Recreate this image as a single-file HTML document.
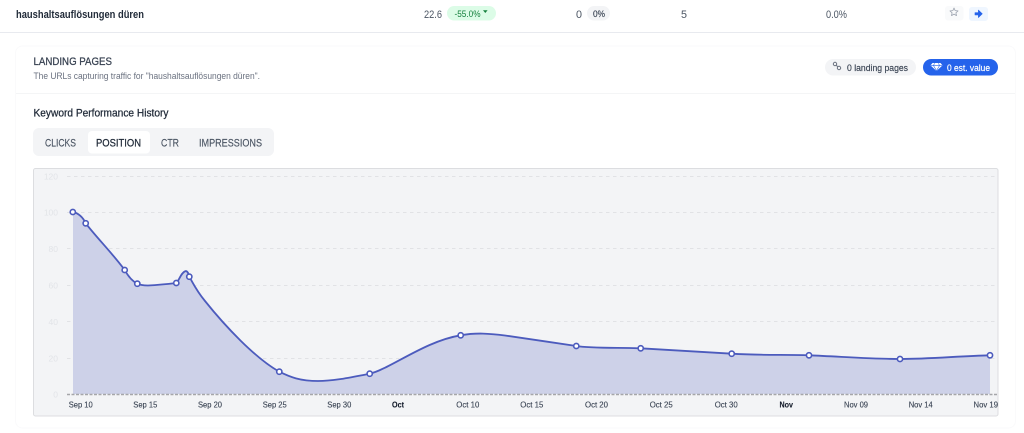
<!DOCTYPE html>
<html lang="en">
<head>
<meta charset="utf-8">
<title>Keyword Performance</title>
<style>
html,body{margin:0;padding:0;width:1024px;height:433px;overflow:hidden;background:#fff}
svg{display:block;filter:blur(.35px)}
text{font-family:"Liberation Sans",sans-serif;font-size:10px;fill:#374151}
.axis{font-size:8.6px;fill:#374151;stroke:#374151;stroke-width:.12px}
.y{font-size:8.5px;fill:#e2e4e8;text-anchor:end}
.grid{stroke:#e1e2e5;stroke-width:1;stroke-dasharray:3.5 3.5}
.pt{fill:#fff;stroke:#4c5bbd;stroke-width:1.6}
</style>
</head>
<body>
<svg width="1024" height="433" viewBox="0 0 1024 433" xmlns="http://www.w3.org/2000/svg">
  <!-- top row -->
  <line x1="0" y1="32.5" x2="1024" y2="32.5" stroke="#e8eaef"/>
  <text x="16" y="17.8" style="font-size:11px;font-weight:bold;fill:#1f2937" textLength="128" lengthAdjust="spacingAndGlyphs">haushaltsauflösungen düren</text>
  <text x="424" y="17.8" style="font-size:11px;fill:#4b5563" textLength="18" lengthAdjust="spacingAndGlyphs">22.6</text>
  <rect x="447" y="6" width="49" height="14.5" rx="7.2" fill="#dcfce7"/>
  <text x="454.5" y="17" style="font-size:9.5px;fill:#15803d" textLength="26" lengthAdjust="spacingAndGlyphs">-55.0%</text>
  <path d="M483 10.2 h4.6 l-2.3 2.8z" fill="#15803d"/>
  <text x="576" y="17.8" style="font-size:11px;fill:#4b5563" textLength="6" lengthAdjust="spacingAndGlyphs">0</text>
  <rect x="587" y="6" width="23" height="14.5" rx="7.2" fill="#f3f4f6"/>
  <text x="593" y="17" style="font-size:9.5px;fill:#374151;stroke:#374151;stroke-width:.15px" textLength="12" lengthAdjust="spacingAndGlyphs">0%</text>
  <text x="681" y="17.8" style="font-size:11px;fill:#4b5563" textLength="6" lengthAdjust="spacingAndGlyphs">5</text>
  <text x="826" y="17.8" style="font-size:11px;fill:#4b5563" textLength="21" lengthAdjust="spacingAndGlyphs">0.0%</text>
  <rect x="945" y="6" width="18.5" height="14.5" rx="3" fill="#f9fafb"/>
  <path d="M954 8l1.15 2.6 2.85.3-2.1 1.9.6 2.8-2.5-1.45-2.5 1.45.6-2.8-2.1-1.9 2.85-.3z" fill="none" stroke="#9ca3af" stroke-width=".8" stroke-linejoin="round"/>
  <rect x="969" y="7" width="19" height="14" rx="3" fill="#eff6ff"/>
  <path d="M975 12.7h3.4v-2.6l3.9 3.7-3.9 3.7v-2.6h-3.4z" fill="#2563eb" stroke="#2563eb" stroke-width=".6" stroke-linejoin="round"/>

  <!-- card -->
  <rect x="15.5" y="46" width="1000" height="382" rx="7" fill="#fff" stroke="#fafafb"/>
  <line x1="16" y1="93.5" x2="1015" y2="93.5" stroke="#f4f5f6"/>
  <text x="33.5" y="64.8" style="font-size:11px;fill:#374151;stroke:#374151;stroke-width:.25px" textLength="78.5" lengthAdjust="spacingAndGlyphs">LANDING PAGES</text>
  <text x="33.5" y="78.8" style="font-size:9px;fill:#6b7280" textLength="226.5" lengthAdjust="spacingAndGlyphs">The URLs capturing traffic for "haushaltsauflösungen düren".</text>

  <rect x="825" y="59" width="91" height="16.5" rx="8.2" fill="#f3f4f6"/>
  <g fill="none" stroke="#6b7280" stroke-width="1">
    <circle cx="835" cy="64" r="1.7"/>
    <circle cx="839" cy="68" r="1.7"/>
    <path d="M836 65l2 2"/>
  </g>
  <text x="847" y="70.8" style="font-size:9.6px;fill:#374151;stroke:#374151;stroke-width:.15px" textLength="61" lengthAdjust="spacingAndGlyphs">0 landing pages</text>
  <rect x="923" y="59" width="75" height="16.5" rx="8.2" fill="#2563eb"/>
  <path d="M932.5 63h8l2 2.4-6 5.6-6-5.6z" fill="#fff"/>
  <path d="M930.8 65.6h11.4M934.5 63.2l-1 2.4 3 5 3-5-1-2.4" fill="none" stroke="#2563eb" stroke-width=".6"/>
  <text x="947" y="70.8" style="font-size:9.6px;fill:#fff;stroke:#fff;stroke-width:.2px" textLength="43" lengthAdjust="spacingAndGlyphs">0 est. value</text>

  <text x="33.5" y="116.3" style="font-size:11px;fill:#1f2937;stroke:#1f2937;stroke-width:.25px" textLength="135" lengthAdjust="spacingAndGlyphs">Keyword Performance History</text>

  <!-- tabs -->
  <rect x="33" y="128" width="241" height="28" rx="6" fill="#f3f4f6"/>
  <rect x="88" y="131" width="62" height="22.5" rx="4" fill="#fff"/>
  <text x="45" y="146.3" style="font-size:11px;fill:#4b5563;stroke:#4b5563;stroke-width:.15px" textLength="31" lengthAdjust="spacingAndGlyphs">CLICKS</text>
  <text x="96" y="146.3" style="font-size:11px;fill:#1f2937;stroke:#1f2937;stroke-width:.25px" textLength="45" lengthAdjust="spacingAndGlyphs">POSITION</text>
  <text x="161" y="146.3" style="font-size:11px;fill:#4b5563;stroke:#4b5563;stroke-width:.15px" textLength="18" lengthAdjust="spacingAndGlyphs">CTR</text>
  <text x="199" y="146.3" style="font-size:11px;fill:#4b5563;stroke:#4b5563;stroke-width:.15px" textLength="63" lengthAdjust="spacingAndGlyphs">IMPRESSIONS</text>

  <!-- chart -->
  <rect x="33.5" y="168.5" width="964.5" height="247.5" rx="2" fill="#f3f4f6" stroke="#dcdde0"/>
  <g class="grid">
    <line x1="67" y1="176.5" x2="997" y2="176.5"/>
    <line x1="67" y1="212.5" x2="997" y2="212.5"/>
    <line x1="67" y1="248.5" x2="997" y2="248.5"/>
    <line x1="67" y1="285.5" x2="997" y2="285.5"/>
    <line x1="67" y1="321.5" x2="997" y2="321.5"/>
    <line x1="67" y1="358.5" x2="997" y2="358.5"/>
  </g>
  <g>
    <text class="y" x="58" y="179.5">120</text>
    <text class="y" x="58" y="215.5">100</text>
    <text class="y" x="58" y="252">80</text>
    <text class="y" x="58" y="288.5">60</text>
    <text class="y" x="58" y="325">40</text>
    <text class="y" x="58" y="361.5">20</text>
    <text class="y" x="58" y="397.5">0</text>
  </g>
  <path fill="#cdd1e8" d="M73 212C78 213 83 217 85.7 223.3C97 238 113 254 124.7 270C128 276 132 281 137.3 283.7C140 285 143 285.5 148 285.5C158 285 168 284 176.3 283C179 281 181 272 186 271C188 271.5 188.5 274 189.3 276.7C193 283 196 290 205 301C225 326 255 358 279.3 371.7C290 377 300 381 318 381C335 381 352 377 369.7 373.7C390 369 425 341 460.7 335.3C476 332.5 490 333.5 505 335.5C530 339 552 342.5 576.3 346C590 348.5 620 347.5 640.7 348.3C670 350 700 352 731.7 353.7C760 355.5 785 354.5 809 355.3C840 356.5 870 359 900 359C930 359 960 356 990 355.3V394H73Z"/>
  <line x1="67" y1="394.5" x2="997" y2="394.5" stroke="#a5a6a9" stroke-width="1.4" stroke-dasharray="3 1.5"/>
  <path fill="none" stroke="#4c5bbd" stroke-width="1.8" d="M73 212C78 213 83 217 85.7 223.3C97 238 113 254 124.7 270C128 276 132 281 137.3 283.7C140 285 143 285.5 148 285.5C158 285 168 284 176.3 283C179 281 181 272 186 271C188 271.5 188.5 274 189.3 276.7C193 283 196 290 205 301C225 326 255 358 279.3 371.7C290 377 300 381 318 381C335 381 352 377 369.7 373.7C390 369 425 341 460.7 335.3C476 332.5 490 333.5 505 335.5C530 339 552 342.5 576.3 346C590 348.5 620 347.5 640.7 348.3C670 350 700 352 731.7 353.7C760 355.5 785 354.5 809 355.3C840 356.5 870 359 900 359C930 359 960 356 990 355.3"/>
  <g class="pt">
    <circle cx="72.8" cy="212" r="2.6"/>
    <circle cx="85.7" cy="223.3" r="2.6"/>
    <circle cx="124.7" cy="270" r="2.6"/>
    <circle cx="137.3" cy="283.7" r="2.6"/>
    <circle cx="176.3" cy="283" r="2.6"/>
    <circle cx="189.3" cy="276.7" r="2.6"/>
    <circle cx="279.3" cy="371.7" r="2.6"/>
    <circle cx="369.7" cy="373.7" r="2.6"/>
    <circle cx="460.7" cy="335.3" r="2.6"/>
    <circle cx="576.3" cy="346" r="2.6"/>
    <circle cx="640.7" cy="348.3" r="2.6"/>
    <circle cx="731.7" cy="353.7" r="2.6"/>
    <circle cx="809" cy="355.3" r="2.6"/>
    <circle cx="900" cy="359" r="2.6"/>
    <circle cx="990" cy="355.3" r="2.6"/>
  </g>
  <g>
    <text class="axis" x="68.7" y="407.7" textLength="24" lengthAdjust="spacingAndGlyphs">Sep 10</text>
    <text class="axis" x="133.3" y="407.7" textLength="24" lengthAdjust="spacingAndGlyphs">Sep 15</text>
    <text class="axis" x="198" y="407.7" textLength="24" lengthAdjust="spacingAndGlyphs">Sep 20</text>
    <text class="axis" x="262.7" y="407.7" textLength="24" lengthAdjust="spacingAndGlyphs">Sep 25</text>
    <text class="axis" x="327.3" y="407.7" textLength="24" lengthAdjust="spacingAndGlyphs">Sep 30</text>
    <text class="axis" x="392" y="407.7" style="font-weight:bold;fill:#111827" textLength="12" lengthAdjust="spacingAndGlyphs">Oct</text>
    <text class="axis" x="456.3" y="407.7" textLength="23" lengthAdjust="spacingAndGlyphs">Oct 10</text>
    <text class="axis" x="520.3" y="407.7" textLength="23" lengthAdjust="spacingAndGlyphs">Oct 15</text>
    <text class="axis" x="585" y="407.7" textLength="23" lengthAdjust="spacingAndGlyphs">Oct 20</text>
    <text class="axis" x="649.7" y="407.7" textLength="23" lengthAdjust="spacingAndGlyphs">Oct 25</text>
    <text class="axis" x="714.7" y="407.7" textLength="23" lengthAdjust="spacingAndGlyphs">Oct 30</text>
    <text class="axis" x="779.5" y="407.7" style="font-weight:bold;fill:#111827" textLength="13.5" lengthAdjust="spacingAndGlyphs">Nov</text>
    <text class="axis" x="844" y="407.7" textLength="24" lengthAdjust="spacingAndGlyphs">Nov 09</text>
    <text class="axis" x="908.7" y="407.7" textLength="24" lengthAdjust="spacingAndGlyphs">Nov 14</text>
    <text class="axis" x="973.5" y="407.7" textLength="24.5" lengthAdjust="spacingAndGlyphs">Nov 19</text>
  </g>
</svg>
</body>
</html>
